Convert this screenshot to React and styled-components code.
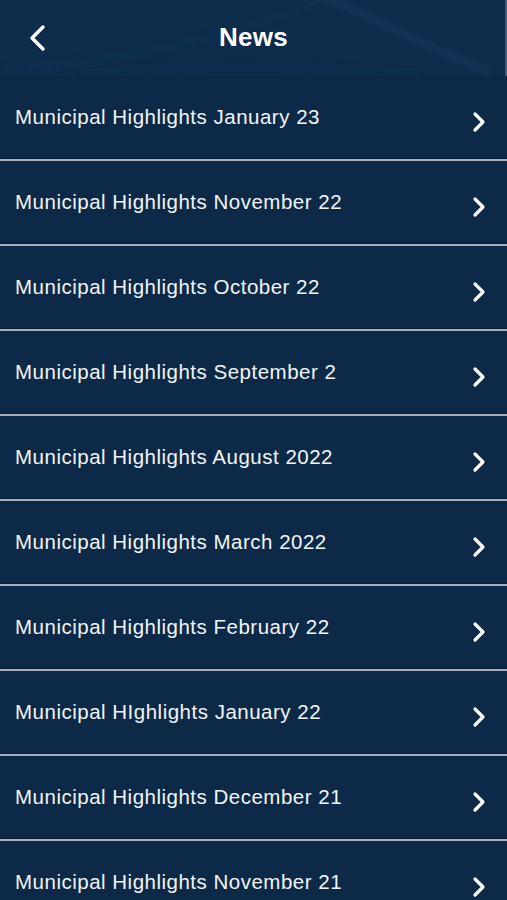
import React from 'react'
import styled, { createGlobalStyle } from 'styled-components'

const GlobalStyle = createGlobalStyle`
  html, body {
    margin: 0;
    padding: 0;
    background: #0c2a48;
  }
  body {
    font-family: 'Liberation Sans', Arial, sans-serif;
  }
`

const items = [
  'Municipal Highlights January 23',
  'Municipal Highlights November 22',
  'Municipal Highlights October 22',
  'Municipal Highlights September 2',
  'Municipal Highlights August 2022',
  'Municipal Highlights March 2022',
  'Municipal Highlights February 22',
  'Municipal HIghlights January 22',
  'Municipal Highlights December 21',
  'Municipal Highlights November 21',
]

const App = () => {
  return (
    <Screen>
      <GlobalStyle />
      <Header>
        <Waves viewBox='0 0 507 76' preserveAspectRatio='none'>
          <defs>
            <filter id='soft'>
              <feGaussianBlur stdDeviation='3' />
            </filter>
          </defs>
          <g filter='url(#soft)' fill='none'>
            <path d='M320 -5 C 380 20, 420 45, 490 72' stroke='#1e4670' strokeWidth='6' opacity='0.45' />
            <path d='M0 70 C 140 60, 260 30, 330 -5' stroke='#163b60' strokeWidth='5' opacity='0.35' />
            <path d='M80 76 C 200 60, 300 65, 420 74' stroke='#163b60' strokeWidth='4' opacity='0.3' />
          </g>
        </Waves>
        <BackButton aria-label='Back'>
          <svg width='18' height='28' viewBox='0 0 18 28'>
            <path d='M15 3 L4 14 L15 25' stroke='#fff' strokeWidth='3.5' fill='none' strokeLinecap='round' strokeLinejoin='round' />
          </svg>
        </BackButton>
        <Title>News</Title>
        <EdgeLine />
      </Header>
      <List>
        {items.map((label, i) => (
          <Row key={i}>
            <Label>{label}</Label>
            <Chevron viewBox='0 0 16 22' width='16' height='22'>
              <path d='M4 3 L12 11 L4 19' stroke='#fff' strokeWidth='3.2' fill='none' strokeLinecap='round' strokeLinejoin='round' />
            </Chevron>
          </Row>
        ))}
      </List>
    </Screen>
  )
}

const Screen = styled.div`
  width: 507px;
  height: 900px;
  overflow: hidden;
  background: #0c2a48;
  color: #f2f4f7;
`

const Header = styled.header`
  position: relative;
  height: 76px;
  display: flex;
  align-items: center;
  justify-content: center;
  background: #0d2b4a;
`

const Waves = styled.svg`
  position: absolute;
  inset: 0;
  width: 100%;
  height: 100%;
`

const EdgeLine = styled.div`
  position: absolute;
  top: 0;
  right: 0;
  width: 2px;
  height: 76px;
  background: #3f5a78;
`

const BackButton = styled.button`
  position: absolute;
  left: 28px;
  top: 24px;
  padding: 0;
  border: none;
  background: transparent;
  display: flex;
`

const Title = styled.h1`
  position: relative;
  margin: 0;
  font-family: 'Liberation Sans', Arial, sans-serif;
  font-size: 26px;
  font-weight: 700;
  color: #ffffff;
  letter-spacing: 0.3px;
  margin-top: -2px;
`

const List = styled.ul`
  list-style: none;
  margin: 0;
  padding: 0;
`

const Row = styled.li`
  height: 83px;
  display: flex;
  align-items: center;
  justify-content: space-between;
  padding: 0 20px 0 15px;
  border-bottom: 2px solid #a7aec0;
  box-shadow: 0 -1px 0 #08203a inset;
`

const Label = styled.span`
  font-size: 20.5px;
  letter-spacing: 0.5px;
  color: #f2f4f7;
  margin-top: -2px;
`

const Chevron = styled.svg`
  margin-top: 8px;
`

export default App
